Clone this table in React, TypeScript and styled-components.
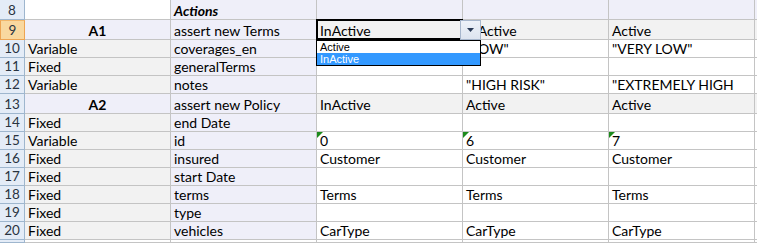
import React from "react";
import styled, { createGlobalStyle, css } from "styled-components";

type Tone = "plain" | "lav" | "gray";

interface ICell {
  text?: string;
  tone?: Tone;
  bold?: boolean;
  italic?: boolean;
  center?: boolean;
  flag?: boolean;
  wrap?: boolean;
  dropdown?: boolean;
}

interface IRow {
  n: number | null;
  h: number;
  selected?: boolean;
  edge: Tone;
  cells: ICell[];
}

const GlobalStyle = createGlobalStyle`
  html, body {
    margin: 0;
    padding: 0;
    background: #fff;
    overflow: hidden;
  }
  body {
    font-family: Lato, "Liberation Sans", sans-serif;
  }
`;

const TONES: Record<Tone, string> = {
  plain: "#ffffff",
  lav: "#efeff9",
  gray: "#f2f2f2",
};

const Sheet = styled.div<{ $rows: string }>`
  display: grid;
  grid-template-columns: 25px 146px 146px 146px 146px 146px 1fr;
  grid-template-rows: ${(p) => p.$rows};
  width: 757px;
  height: 243px;
  overflow: hidden;
`;

const RowHead = styled.div<{ $selected?: boolean }>`
  box-sizing: border-box;
  display: flex;
  align-items: flex-end;
  justify-content: center;
  background: #e4ecf7;
  border-right: 1px solid #9eb6ce;
  border-bottom: 1px solid #9eb6ce;
  color: #2a3441;
  font-size: 13.5px;
  line-height: 17px;
  ${(p) =>
    p.$selected &&
    css`
      background: #f9d89f;
      border: 1px solid #eda452;
      border-top-color: #f2b76a;
    `}
`;

const Cell = styled.div<{
  $tone: Tone;
  $bold?: boolean;
  $italic?: boolean;
  $center?: boolean;
  $wrap?: boolean;
}>`
  position: relative;
  box-sizing: border-box;
  display: flex;
  align-items: ${(p) => (p.$wrap ? "flex-start" : "flex-end")};
  justify-content: ${(p) => (p.$center ? "center" : "flex-start")};
  padding: 0 3px;
  background: ${(p) => TONES[p.$tone]};
  border-right: 1px solid #c4c4c4;
  border-bottom: 1px solid #c4c4c4;
  color: #000;
  font-size: 14px;
  line-height: 17px;
  font-weight: ${(p) => (p.$bold ? 700 : 400)};
  font-style: ${(p) => (p.$italic ? "italic" : "normal")};
  white-space: ${(p) => (p.$wrap ? "normal" : "nowrap")};
  overflow: ${(p) => (p.$wrap ? "hidden" : "visible")};
  min-width: 0;
`;

const Flag = styled.span`
  position: absolute;
  top: 0;
  left: 0;
  width: 0;
  height: 0;
  border-top: 6px solid #1c8a1c;
  border-right: 6px solid transparent;
`;

const SelectionFrame = styled.div`
  position: absolute;
  top: -1px;
  left: -1px;
  right: -1px;
  bottom: -1px;
  border: 2px solid #000;
  z-index: 2;
`;

const DropButton = styled.div`
  position: absolute;
  top: 0;
  left: 143px;
  width: 21px;
  height: 20px;
  box-sizing: border-box;
  display: flex;
  align-items: center;
  justify-content: center;
  background: linear-gradient(#eef2f9, #dde4ef);
  border: 1px solid #a7b6cc;
  z-index: 3;
`;

const DropList = styled.div`
  position: absolute;
  top: 20px;
  left: -1px;
  width: 165px;
  box-sizing: border-box;
  background: #fff;
  border: 1px solid #000;
  z-index: 3;
  font-family: "Liberation Sans", Arial, sans-serif;
  font-size: 11px;
  font-style: normal;
  font-weight: 400;
`;

const DropItem = styled.div<{ $active?: boolean }>`
  height: 12px;
  line-height: 12px;
  padding-left: 3px;
  background: ${(p) => (p.$active ? "#3399ff" : "transparent")};
  color: ${(p) => (p.$active ? "#fff" : "#000")};
`;

const c = (text = "", tone: Tone = "plain", extra: Partial<ICell> = {}): ICell => ({
  text,
  tone,
  ...extra,
});

const label = (text: string) => c(text, "gray");
const field = (text: string) => c(text, "lav");
const val = (text = "", extra: Partial<ICell> = {}) => c(text, "plain", extra);

const ROWS: IRow[] = [
  {
    n: 8,
    h: 20,
    edge: "lav",
    cells: [c(""), c("Actions", "lav", { bold: true, italic: true }), c("", "lav"), c("", "lav"), c("", "lav")],
  },
  {
    n: 9,
    h: 20,
    selected: true,
    edge: "gray",
    cells: [
      c("A1", "lav", { bold: true, center: true }),
      field("assert new Terms"),
      c("InActive", "gray", { dropdown: true }),
      c("InActive", "gray"),
      c("Active", "gray"),
    ],
  },
  { n: 10, h: 18, edge: "plain", cells: [label("Variable"), field("coverages_en"), val(), val('"LOW"'), val('"VERY LOW"')] },
  { n: 11, h: 18, edge: "plain", cells: [label("Fixed"), field("generalTerms"), val(), val(), val()] },
  {
    n: 12,
    h: 18,
    edge: "plain",
    cells: [label("Variable"), field("notes"), val(), val('"HIGH RISK"'), val('"EXTREMELY HIGH RISK"', { wrap: true })],
  },
  {
    n: 13,
    h: 20,
    edge: "gray",
    cells: [
      c("A2", "lav", { bold: true, center: true }),
      field("assert new Policy"),
      c("InActive", "gray"),
      c("Active", "gray"),
      c("Active", "gray"),
    ],
  },
  { n: 14, h: 18, edge: "plain", cells: [label("Fixed"), field("end Date"), val(), val(), val()] },
  {
    n: 15,
    h: 18,
    edge: "plain",
    cells: [label("Variable"), field("id"), val("0", { flag: true }), val("6", { flag: true }), val("7", { flag: true })],
  },
  { n: 16, h: 18, edge: "plain", cells: [label("Fixed"), field("insured"), val("Customer"), val("Customer"), val("Customer")] },
  { n: 17, h: 18, edge: "plain", cells: [label("Fixed"), field("start Date"), val(), val(), val()] },
  { n: 18, h: 18, edge: "plain", cells: [label("Fixed"), field("terms"), val("Terms"), val("Terms"), val("Terms")] },
  { n: 19, h: 18, edge: "plain", cells: [label("Fixed"), field("type"), val(), val(), val()] },
  { n: 20, h: 18, edge: "plain", cells: [label("Fixed"), field("vehicles"), val("CarType"), val("CarType"), val("CarType")] },
  { n: null, h: 3, edge: "plain", cells: [val(), val(), val(), val(), val()] },
];

const Dropdown: React.FC = () => (
  <>
    <SelectionFrame />
    <DropButton>
      <svg width="7" height="4" viewBox="0 0 7 4">
        <path d="M0 0h7L3.5 4z" fill="#2b3b57" />
      </svg>
    </DropButton>
    <DropList>
      <DropItem>Active</DropItem>
      <DropItem $active>InActive</DropItem>
    </DropList>
  </>
);

const App: React.FC = () => {
  const template = ROWS.map((r) => `${r.h}px`).join(" ");
  return (
    <>
      <GlobalStyle />
      <Sheet $rows={template}>
        {ROWS.map((row, ri) => (
          <React.Fragment key={ri}>
            <RowHead $selected={row.selected}>{row.n}</RowHead>
            {row.cells.map((cell, ci) => (
              <Cell
                key={ci}
                $tone={cell.tone ?? "plain"}
                $bold={cell.bold}
                $italic={cell.italic}
                $center={cell.center}
                $wrap={cell.wrap}
              >
                {cell.flag && <Flag />}
                {cell.text}
                {cell.dropdown && <Dropdown />}
              </Cell>
            ))}
            <Cell $tone={row.edge} />
          </React.Fragment>
        ))}
      </Sheet>
    </>
  );
};

export default App;
